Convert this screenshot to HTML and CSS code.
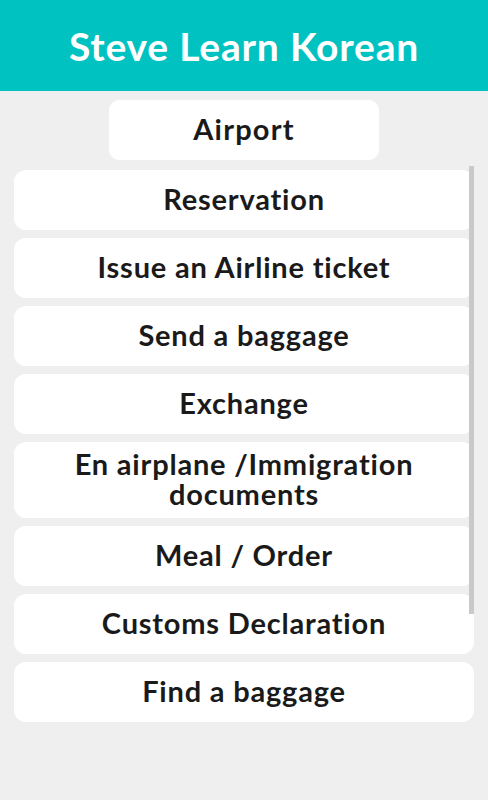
FILE: index.html
```html
<!DOCTYPE html>
<html>
<head>
<meta charset="utf-8">
<link rel="stylesheet" href="styles.css">
</head>
<body>
<header class="topbar"><h1 class="title">Steve Learn Korean</h1></header>
<main class="content">
  <div class="category">Airport</div>
  <div class="list">
    <div class="item">Reservation</div>
    <div class="item">Issue an Airline ticket</div>
    <div class="item">Send a baggage</div>
    <div class="item">Exchange</div>
    <div class="item">En airplane /Immigration documents</div>
    <div class="item">Meal / Order</div>
    <div class="item">Customs Declaration</div>
    <div class="item">Find a baggage</div>
    <div class="scrollbar"></div>
  </div>
</main>
</body>
</html>
```
FILE: styles.css
```css
html, body {
  margin: 0;
  padding: 0;
  background: #efefef;
  height: 100%;
}
body {
  font-family: "Lato", "Noto Sans", sans-serif;
  color: #1a1a1a;
}
.topbar {
  background: #00c3c1;
  height: 91px;
  display: flex;
  align-items: center;
  justify-content: center;
}
.title {
  margin: 0;
  color: #ffffff;
  font-size: 39px;
  font-weight: 700;
  letter-spacing: 0.8px;
}
.content {
  display: flex;
  flex-direction: column;
  align-items: center;
  padding-top: 9px;
}
.category {
  width: 270px;
  height: 60px;
  box-sizing: border-box;
  padding-bottom: 3px;
  background: #ffffff;
  border-radius: 10px;
  display: flex;
  align-items: center;
  justify-content: center;
  font-size: 29px;
  letter-spacing: 1.2px;
  font-weight: 700;
}
.list {
  position: relative;
  align-self: stretch;
  margin: 10px 14px 0;
  display: flex;
  flex-direction: column;
  gap: 8px;
}
.item {
  min-height: 60px;
  box-sizing: border-box;
  padding: 7px 20px 9px;
  background: #ffffff;
  border-radius: 12px;
  display: flex;
  align-items: center;
  justify-content: center;
  text-align: center;
  font-size: 29px;
  line-height: 30px;
  letter-spacing: 0.8px;
  font-weight: 700;
}
.scrollbar {
  position: absolute;
  right: 0;
  top: -4px;
  width: 5px;
  height: 448px;
  background: #c9c9c9;
}
```
